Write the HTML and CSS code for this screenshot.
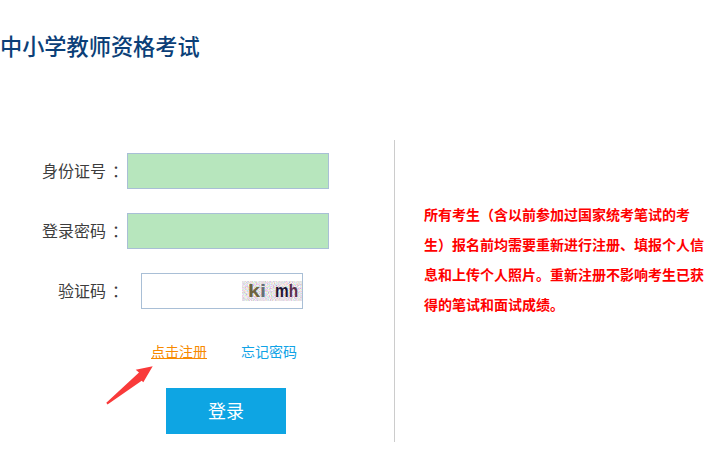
FILE: index.html
```html
<!DOCTYPE html>
<html lang="zh">

<head>
    <meta charset="utf-8">
    <title>中小学教师资格考试</title>
    <link rel="stylesheet" href="styles.css">
</head>

<body>
    <h1 class="title">中小学教师资格考试</h1>

    <div class="main">
        <form class="login">
            <div class="row">
                <label class="label">身份证号<span class="colon">：</span></label>
                <input class="field field-filled" type="text">
            </div>
            <div class="row">
                <label class="label">登录密码<span class="colon">：</span></label>
                <input class="field field-filled" type="password">
            </div>
            <div class="row">
                <label class="label">验证码<span class="colon">：</span></label>
                <div class="code-box">
                    <svg class="captcha" width="60" height="20" viewBox="0 0 60 20">
                        <filter id="noise" x="0" y="0" width="100%" height="100%">
                            <feTurbulence type="fractalNoise" baseFrequency="0.95" numOctaves="2" seed="4"/>
                            <feColorMatrix values="1.1 0 0 0 0.24  0 1.1 0 0 0.2  0 0 1.1 0 0.24  0 0 0 0 1"/>
                        </filter>
                        <rect width="60" height="20" filter="url(#noise)"/>
                        <text x="6" y="16" textLength="18" lengthAdjust="spacingAndGlyphs"><tspan class="c1">k</tspan><tspan class="c2">i</tspan></text>
                        <text x="33" y="16" textLength="23" lengthAdjust="spacingAndGlyphs"><tspan class="c3">m</tspan><tspan class="c4">h</tspan></text>
                    </svg>
                </div>
            </div>
            <div class="links">
                <a class="link-register" href="#">点击注册</a>
                <a class="link-forgot" href="#">忘记密码</a>
                <svg class="arrow" width="50" height="44" viewBox="0 0 50 44">
                    <path d="M0.300 39.800 L33 9.500 L29.700 6.700 L46.700 3.300 L37.300 19.300 L35.700 17.700 L1.500 41.600 Z" fill="#f93a3a"/>
                </svg>
            </div>
            <button class="submit" type="button">登录</button>
        </form>

        <div class="notice">
            <p>所有考生<span class="paren">（</span>含以前参加过国家统考笔试的考<span class="nobr">生<span class="paren">）</span></span>报名前均需要重新进行注册、填报个人信息和上传个人照片。重新注册不影响考生已获得的笔试和面试成绩。</p>
        </div>
    </div>
</body>

</html>
```

FILE: styles.css
```css
html, body {
    margin: 0;
    padding: 0;
}

body {
    font-family: "Noto Sans CJK SC", "Liberation Sans", sans-serif;
    background-color: #fff;
    overflow: hidden;
}

.title {
    margin: 0;
    padding-top: 29px;
    height: 140px;
    box-sizing: border-box;
    font-size: 22.2px;
    line-height: 32px;
    font-weight: 500;
    color: #0b3f78;
}

.main {
    display: flex;
}

.login {
    width: 395px;
    height: 302px;
    padding-top: 13px;
    box-sizing: border-box;
    border-right: 1px solid #ccc;
}

.row {
    display: flex;
    align-items: center;
    height: 36px;
    margin-bottom: 24px;
}

.label {
    width: 122px;
    margin-right: 5px;
    padding-bottom: 2px;
    text-align: right;
    font-size: 16px;
    color: #3d3d3d;
    white-space: nowrap;
}

.colon {
    display: inline-block;
    width: 16px;
    box-sizing: border-box;
    padding-left: 6px;
    text-align: left;
}

.field {
    width: 202px;
    height: 36px;
    box-sizing: border-box;
    border: 1px solid #a9bfd6;
    padding: 0;
    outline: none;
}

.field-filled {
    background-color: #b7e6bd;
}

.code-box {
    width: 162px;
    height: 36px;
    box-sizing: border-box;
    margin-left: 14px;
    border: 1px solid #a9bfd6;
    display: flex;
    justify-content: flex-end;
    align-items: center;
}

.captcha {
    display: block;
    font-family: "Liberation Sans", sans-serif;
    font-size: 19px;
    font-weight: 700;
}

.c1 { fill: #6e6440; }
.c2 { fill: #66707a; }
.c3 { fill: #1f1633; }
.c4 { fill: #5a2f4c; }

.links {
    position: relative;
    display: flex;
    gap: 34px;
    padding-left: 151px;
    height: 20px;
    margin-top: 32px;
    font-size: 14px;
    line-height: 20px;
}

.link-register {
    color: #f78a00;
    text-decoration: underline;
}

.link-forgot {
    color: #10a3e6;
    text-decoration: none;
}

.arrow {
    position: absolute;
    left: 106px;
    top: 22px;
}

.submit {
    display: block;
    width: 120px;
    height: 46px;
    margin: 27px 0 0 166px;
    border: none;
    padding: 0 0 3px;
    background-color: #0ea5e3;
    color: #fff;
    font-family: inherit;
    font-size: 18px;
}

.notice {
    width: 280px;
    margin: 59px 0 0 29px;
}

.notice p {
    margin: 0;
    color: #f00;
    font-size: 14px;
    font-weight: 700;
    line-height: 30px;
}

.nobr {
    white-space: nowrap;
}

.paren {
    display: inline-block;
    width: 14px;
    text-align: center;
}
```
